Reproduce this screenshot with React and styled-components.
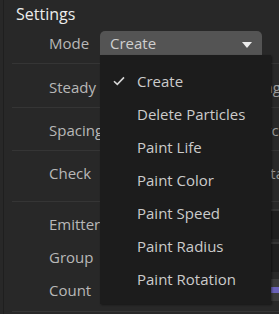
import React from 'react'
import styled, { createGlobalStyle } from 'styled-components'

const GlobalStyle = createGlobalStyle`
  html, body {
    margin: 0;
    padding: 0;
    background: #282828;
    overflow: hidden;
  }
  body {
    font-family: "Open Sans", "Noto Sans", sans-serif;
  }
`;

const items = ['Create', 'Delete Particles', 'Paint Life', 'Paint Color', 'Paint Speed', 'Paint Radius', 'Paint Rotation'];

export default function App() {
  return (
    <>
      <GlobalStyle />
      <Panel>
        <Title>Settings</Title>
        <Row $h={24}>
          <Label>Mode</Label>
          <SelectButton>
            <SelectText>Create</SelectText>
            <Caret />
          </SelectButton>
        </Row>
        <Separator $gap={8} />
        <Row $h={43} $padT={2}>
          <Label>Steady</Label>
          <ValueText $w={181}>Spawning</ValueText>
        </Row>
        <Separator />
        <Row $h={42} $padT={1}>
          <Label>Spacing</Label>
          <ValueText $w={187}>Source</ValueText>
        </Row>
        <Separator />
        <Row $h={50} $padB={6}>
          <Label>Check</Label>
          <ValueText $w={184}>Data</ValueText>
        </Row>
        <Separator />
        <Group>
          <Row $h={33}>
            <Label>Emitter</Label>
            <Field />
          </Row>
          <Row $h={33}>
            <Label>Group</Label>
            <Field />
          </Row>
          <Row $h={33}>
            <Label>Count</Label>
            <Slider><SliderFill /></Slider>
          </Row>
        </Group>
        <Separator />

        <Menu>
          {items.map((item, i) => (
            <MenuItem key={item}>
              <Check>
                {i === 0 ? (
                  <svg width="12" height="10" viewBox="0 0 12 10">
                    <path d="M1 5.2 L4.3 8.4 L11 1.4" fill="none" stroke="#d6d6d6" strokeWidth="1.6" />
                  </svg>
                ) : null}
              </Check>
              {item}
            </MenuItem>
          ))}
        </Menu>
      </Panel>
    </>
  )
}

const Panel = styled.div`
  position: relative;
  width: 300px;
  height: 314px;
  margin-left: 3px;
  border-left: 1px solid #1f1f1f;
  box-sizing: border-box;
  display: flex;
  flex-direction: column;
`;

const Title = styled.div`
  height: 31px;
  padding-left: 12px;
  font-size: 16px;
  line-height: 28px;
  color: #ececec;
`;

const Row = styled.div`
  height: ${p => p.$h}px;
  padding-top: ${p => p.$padT || 0}px;
  padding-bottom: ${p => p.$padB || 0}px;
  box-sizing: border-box;
  display: flex;
  align-items: center;
  padding-left: 45px;
  overflow: hidden;
  white-space: nowrap;
`;

const Group = styled.div`
  display: flex;
  flex-direction: column;
  padding: 5px 0 5px;
`;

const Label = styled.div`
  width: 51px;
  flex-shrink: 0;
  font-size: 15px;
  color: #b8b8b8;
`;

const Separator = styled.div`
  height: 1px;
  margin-top: ${p => p.$gap || 0}px;
  margin-left: 8px;
  background: #353535;
  flex-shrink: 0;
`;

const SelectButton = styled.div`
  width: 162px;
  height: 24px;
  flex-shrink: 0;
  background: #545454;
  border-radius: 5px 5px 0 0;
  display: flex;
  align-items: center;
  justify-content: space-between;
  padding: 0 10px;
  box-sizing: border-box;
`;

const SelectText = styled.span`
  font-size: 15px;
  color: #cfcfcf;
`;

const Caret = styled.span`
  width: 0;
  height: 0;
  margin-top: 3px;
  border-left: 5.5px solid transparent;
  border-right: 5.5px solid transparent;
  border-top: 6px solid #ececec;
`;

const ValueText = styled.div`
  width: ${p => p.$w}px;
  flex-shrink: 0;
  text-align: right;
  font-size: 15px;
  color: #9a9a9a;
`;

const Field = styled.div`
  margin-left: 170px;
  width: 60px;
  height: 28px;
  flex-shrink: 0;
  background: #1e1e1e;
  border-top: 2px solid #343434;
`;

const Slider = styled.div`
  margin-left: 170px;
  width: 60px;
  height: 22px;
  flex-shrink: 0;
  background: #3b3b3b;
  display: flex;
  align-items: center;
`;

const SliderFill = styled.div`
  width: 100%;
  height: 6px;
  background: #6a62b8;
`;

const Menu = styled.div`
  position: absolute;
  top: 55px;
  left: 96px;
  width: 171px;
  height: 249px;
  box-sizing: border-box;
  padding-top: 9px;
  background: #1c1c1c;
  box-shadow: 1px 1px 2px rgba(0, 0, 0, 0.45);
  display: flex;
  flex-direction: column;
`;

const MenuItem = styled.div`
  height: 33px;
  display: flex;
  align-items: center;
  font-size: 15px;
  color: #cbcbcb;
`;

const Check = styled.span`
  width: 37px;
  padding-left: 13px;
  box-sizing: border-box;
  display: flex;
  align-items: center;
`;
